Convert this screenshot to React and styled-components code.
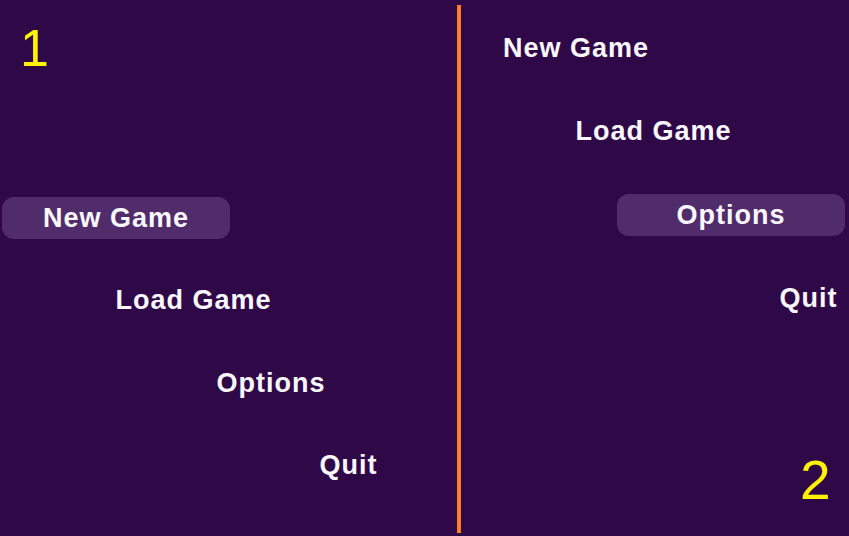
import React from 'react';
import styled, { createGlobalStyle } from 'styled-components';

const GlobalStyle = createGlobalStyle`
  html, body {
    margin: 0;
    padding: 0;
    background: #2f0848;
  }
  body {
    font-family: "Liberation Sans", Arial, sans-serif;
  }
`;

const Screen = styled.div`
  display: flex;
  width: 849px;
  height: 536px;
  background: #2f0848;
  overflow: hidden;
`;

const Panel = styled.div`
  position: relative;
  display: flex;
  flex-direction: column;
  gap: ${props => props.$gap}px;
  box-sizing: border-box;
  width: ${props => props.$width};
  flex: ${props => props.$grow ? 1 : 'none'};
  padding-top: ${props => props.$top}px;
  padding-left: ${props => props.$left}px;
`;

const Divider = styled.div`
  width: 4px;
  margin: 5px 0 3px;
  background: #ff7f27;
  flex: none;
`;

const MenuItem = styled.div`
  display: flex;
  align-items: center;
  justify-content: center;
  width: 228px;
  height: 42px;
  margin-left: ${props => props.$step * 77.5}px;
  border-radius: 12px;
  background: ${props => props.$active ? '#502c6a' : 'transparent'};
  color: #fbf7ff;
  font-family: "Liberation Sans", Arial, sans-serif;
  font-weight: 700;
  font-size: 27px;
  letter-spacing: 1px;
  white-space: nowrap;
`;

const Label = styled.span`
  position: absolute;
  left: ${props => props.$x}px;
  top: ${props => props.$y}px;
  color: #fff200;
  font-family: "Liberation Sans", Arial, sans-serif;
  font-size: ${props => props.$size}px;
  line-height: 1;
`;

const items = ['New Game', 'Load Game', 'Options', 'Quit'];

const Menu = ({ active }) => items.map((name, i) => (
  <MenuItem key={name} $step={i} $active={i === active}>{name}</MenuItem>
));

export default function App() {
  return (
    <>
      <GlobalStyle />
      <Screen>
        <Panel $width="457px" $top={197} $left={2} $gap={40.5}>
          <Label $x={20} $y={22} $size={52}>1</Label>
          <Menu active={0} />
        </Panel>
        <Divider />
        <Panel $grow $top={27} $left={1} $gap={41.5}>
          <Menu active={2} />
          <Label $x={339} $y={453} $size={55}>2</Label>
        </Panel>
      </Screen>
    </>
  );
}
